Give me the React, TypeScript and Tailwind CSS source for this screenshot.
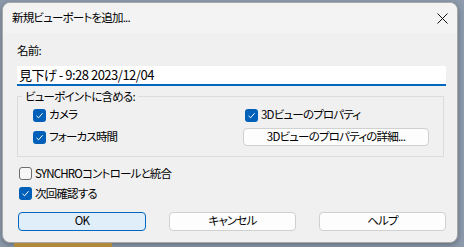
import React from "react";

const font = "font-['Noto_Sans_CJK_JP','Noto_Sans',sans-serif]";

function Check({ checked, label }: { checked: boolean; label: string }) {
  return (
    <div className="flex items-center gap-[3px] h-[14px]">
      {checked ? (
        <span className="w-[13px] h-[13px] rounded-[3px] bg-[#005fb8] flex items-center justify-center">
          <svg width="9" height="9" viewBox="0 0 9 9">
            <path d="M1.5 4.8 L3.6 6.8 L7.6 2.2" fill="none" stroke="#fff" strokeWidth="1" />
          </svg>
        </span>
      ) : (
        <span className="w-[13px] h-[13px] rounded-[3px] border border-[#6e6e6e] bg-[#f6f6f6]" />
      )}
      <span className="text-[11.5px] leading-none text-black">{label}</span>
    </div>
  );
}

function Btn({ label, primary }: { label: string; primary?: boolean }) {
  return (
    <button
      className={
        primary
          ? "w-[128px] h-[19px] rounded-[4px] border border-[#0067c0] bg-[#e0eef9] text-[11.5px] leading-none text-black"
          : "w-[127px] h-[19px] rounded-[4px] border border-[#d0d0d0] bg-[#fdfdfd] text-[11.5px] leading-none text-black"
      }
    >
      {label}
    </button>
  );
}

export default function App() {
  return (
    <div className={`w-[464px] h-[247px] bg-[#8d9bad] overflow-hidden flex flex-col ${font} tracking-[-0.8px] [font-feature-settings:'palt']`}>
      <div className="ml-[2px] mt-[2px] w-[456px] h-[241px] rounded-[8px] border border-[#a8a8a8] bg-[#f0f0f0] overflow-hidden shadow-[0_2px_6px_rgba(0,0,0,0.3)] flex flex-col">
        {/* title bar */}
        <div className="h-[30px] bg-[#f3f3f3] flex items-center justify-between pl-[9px] pr-[8px]">
          <span className="text-[11.5px] text-black">新規ビューポートを追加...</span>
          <svg width="11" height="11" viewBox="0 0 11 11" className="mr-[1px]">
            <path d="M0.5 0.5 L10.5 10.5 M10.5 0.5 L0.5 10.5" stroke="#111" strokeWidth="1" />
          </svg>
        </div>

        <div className="flex flex-col pl-[14px] pr-[11px] pt-[12px]">
          <span className="text-[11.5px] leading-none text-black">名前:</span>
          <div className="mt-[9px] h-[20px] bg-white border-b-2 border-[#0067c0] flex items-center pl-[2px]">
            <span className="text-[13px] leading-none text-black tracking-[-0.5px]">見下げ - 9:28 2023/12/04</span>
          </div>

          <fieldset className="mt-[5px] mr-[2px] border border-[#dcdcdc] h-[66px] pl-[15px] pr-[14px]">
            <legend className="ml-[-11px] px-[3px] text-[11.5px] leading-none text-black">ビューポイントに含める:</legend>
            <div className="grid grid-cols-[212px_1fr] mt-[6px]">
              <Check checked label="カメラ" />
              <Check checked label="3Dビューのプロパティ" />
              <div className="mt-[8px]">
                <Check checked label="フォーカス時間" />
              </div>
              <button className="mt-[6px] ml-[-2px] h-[18px] rounded-[4px] border border-[#d0d0d0] bg-[#fdfdfd] text-[11.5px] leading-none text-black">
                3Dビューのプロパティの詳細...
              </button>
            </div>
          </fieldset>

          <div className="mt-[10px] ml-[2px] flex flex-col gap-[6px]">
            <Check checked={false} label="SYNCHROコントロールと統合" />
            <Check checked label="次回確認する" />
          </div>

          <div className="mt-[11px] ml-[1px] flex gap-[23px]">
            <Btn label="OK" primary />
            <Btn label="キャンセル" />
            <Btn label="ヘルプ" />
          </div>
        </div>
      </div>
      <div className="ml-[14px] w-[98px] flex-1 bg-[#b08a3a]" />
    </div>
  );
}
